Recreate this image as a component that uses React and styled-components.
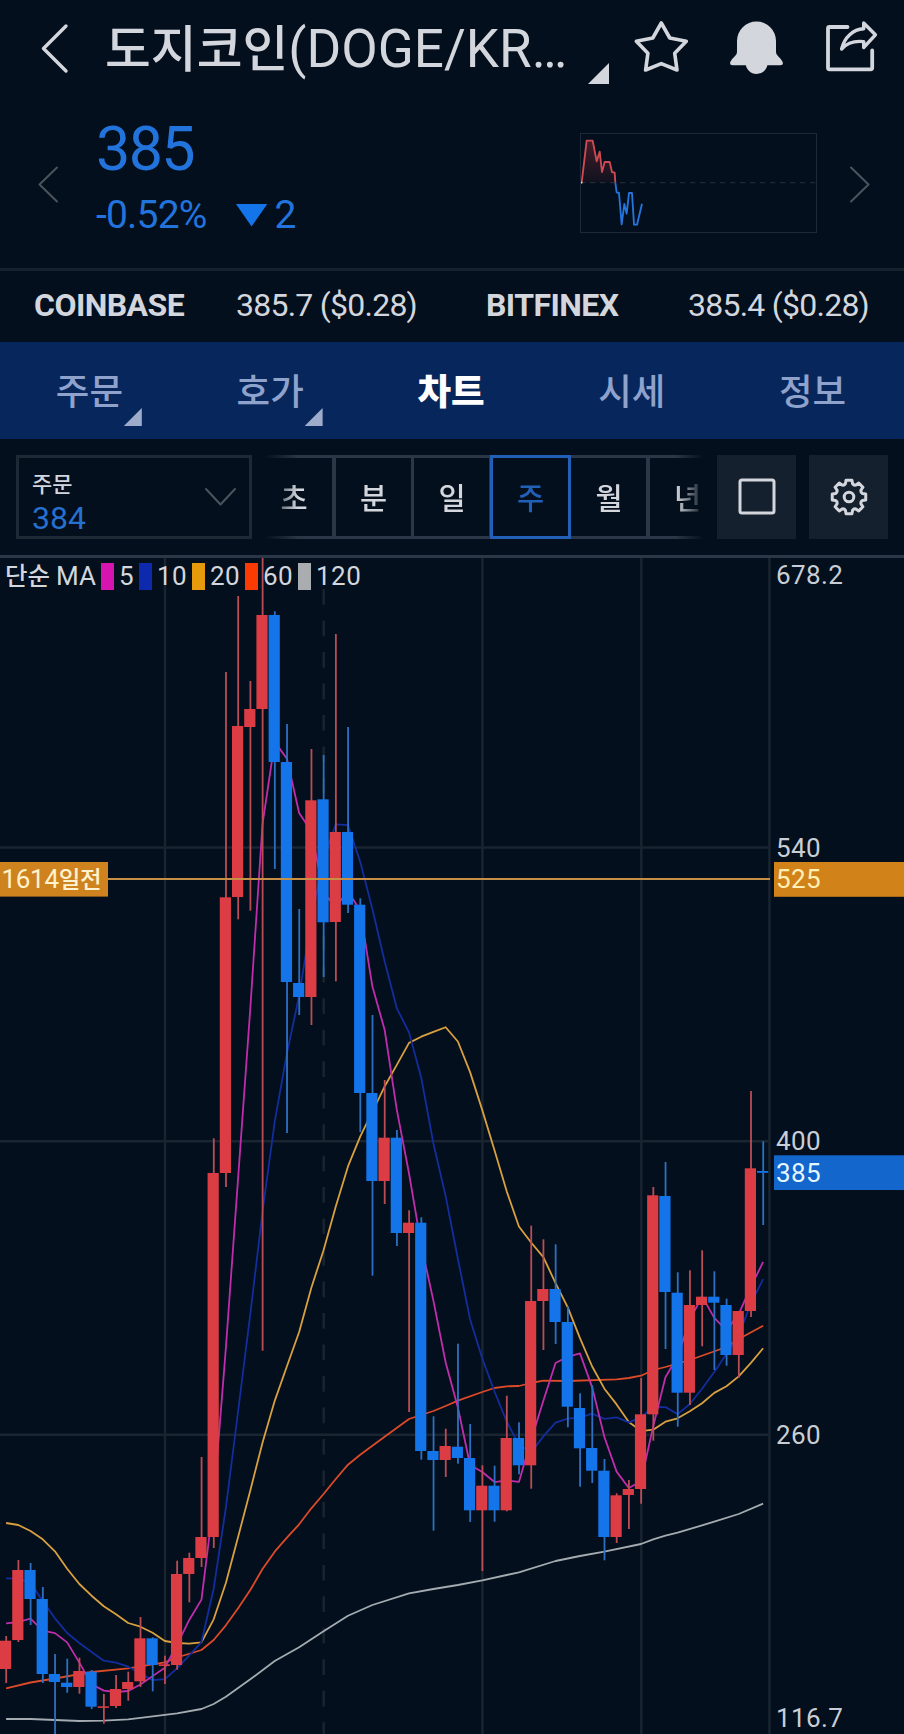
import React, { useState } from 'react';
import styled, { createGlobalStyle, css } from 'styled-components';

const GlobalStyle = createGlobalStyle`
  * {
    box-sizing: border-box;
  }
  body {
    margin: 0;
    background: #030f1c;
  }
  button {
    padding: 0;
    margin: 0;
    border: 0;
    background: none;
    color: inherit;
    font: inherit;
  }
  svg {
    display: block;
    flex: none;
  }
`;

const Page = styled.div`
  display: flex;
  flex-direction: column;
  width: 904px;
  height: 1734px;
  overflow: hidden;
  background: #030f1c;
  color: #d3d6dc;
  font-family: Roboto, 'Noto Sans CJK KR', sans-serif;
`;

const Header = styled.header`
  display: flex;
  align-items: flex-start;
  height: 110px;
  padding: 16px 20px 0 40px;
`;
const BackButton = styled.button`
  display: flex;
  width: 65px;
  height: 62px;
`;
const Title = styled.h1`
  width: 481px;
  margin: 0;
  padding-top: 1px;
  font-size: 53px;
  font-weight: 400;
  line-height: 64px;
  white-space: nowrap;
`;
// Hangul glyphs run larger and thinner than the latin ones at the same size
const Hangul = styled.span`
  font-size: 0.94em;
  font-weight: 500;
`;
const Corner = styled.span`
  width: ${(props) => props.$size}px;
  height: ${(props) => props.$size}px;
  background: currentColor;
  clip-path: polygon(100% 0, 100% 100%, 0 100%);
`;
const TitleCorner = styled(Corner)`
  margin: 47px 21px 0 2px;
`;
const HeaderIcons = styled.div`
  display: flex;
  gap: 34px;
`;

const Summary = styled.section`
  display: flex;
  height: 161px;
  padding: 0 34px 0 38px;
  border-bottom: 3px solid #15212d;
`;
const Step = styled.button`
  height: 37px;
  margin-top: 56px;
  color: #4b535d;
`;
const Quote = styled.div`
  display: flex;
  flex-direction: column;
  flex: 1;
  padding-left: 38px;
  color: #2274dc;
`;
const Price = styled.strong`
  margin-top: 3px;
  font-size: 61px;
  font-weight: 400;
  line-height: 72px;
  letter-spacing: -1.6px;
`;
const Change = styled.div`
  display: flex;
  align-items: center;
  margin-top: 7px;
  font-size: 39px;
  line-height: 46px;
  letter-spacing: -0.8px;
`;
const Down = styled.span`
  width: 32px;
  height: 23px;
  margin: 0 7px 0 29px;
  background: #1474ea;
  clip-path: polygon(0 0, 100% 0, 50% 100%);
`;
const MiniChart = styled.div`
  width: 237px;
  height: 100px;
  margin: 23px 33px 0 0;
  border: 1px solid #1d2934;
`;

const Exchanges = styled.section`
  display: grid;
  grid-template-columns: 1fr 1fr;
  height: 71px;
`;
const Exchange = styled.div`
  display: flex;
  align-items: center;
  justify-content: space-between;
  padding: 0 35px 4px 34px;
  font-size: 32px;
  letter-spacing: -0.75px;
`;
const ExchangeName = styled.b`
  letter-spacing: -0.55px;
`;

const Tabs = styled.nav`
  display: grid;
  grid-template-columns: repeat(5, 1fr);
  height: 97px;
  background: #07275c;
`;
const Tab = styled.button`
  position: relative;
  padding: 0 2px 3px 0;
  color: ${(props) => (props.$active ? '#ffffff' : '#8fa2cc')};
  font-size: 36.5px;
  font-weight: ${(props) => (props.$active ? 900 : 500)};
`;
const TabCorner = styled(Corner)`
  position: absolute;
  right: 39px;
  bottom: 13px;
  background: #9dacca;
`;

const Toolbar = styled.div`
  display: flex;
  height: 119px;
  padding: 16px 16px 0;
  border-bottom: 3px solid #2b3746;
`;
const OrderSelect = styled.button`
  display: flex;
  align-items: center;
  justify-content: space-between;
  width: 236px;
  height: 84px;
  padding: 0 13px;
  border: 3px solid #1d2a36;
  color: #4b535d;
  text-align: left;
`;
const OrderText = styled.span`
  display: flex;
  flex-direction: column;
  padding-top: 12px;
  color: #d3d6dc;
  font-size: 22px;
  font-weight: 500;
  line-height: 28px;
`;
const OrderPrice = styled.span`
  margin-top: 1px;
  color: #2670d0;
  font-size: 32px;
  font-weight: 400;
  line-height: 36px;
`;
const Periods = styled.div`
  display: flex;
  width: 442px;
  height: 84px;
  margin: 0 11px 0 12px;
  overflow: hidden;
  mask-image: linear-gradient(to right, transparent 0, #000 34px, #000 412px, transparent 440px);
`;
const Period = styled.button`
  flex: none;
  width: 81px;
  height: 84px;
  margin-left: -2.5px;
  padding: 0 0 2px 1px;
  border: 3px solid #2b3746;
  font-size: 29.5px;
  font-weight: 500;
  &:first-child {
    width: 84px;
    margin-left: -13px;
    padding-left: 2px;
  }
  ${(props) => props.$active && css`
    z-index: 1;
    border-color: #2260b8;
    color: #2260b8;
  `}
`;
const ToolButton = styled.button`
  display: flex;
  align-items: center;
  justify-content: center;
  width: 79px;
  height: 84px;
  margin-right: 13px;
  background: #15202e;
  &:last-child {
    margin-right: 0;
  }
`;

const ChartArea = styled.main`
  position: relative;
  flex: 1;
`;
const Legend = styled.div`
  position: absolute;
  top: 3px;
  left: 5px;
  display: flex;
  align-items: center;
  height: 30px;
  font-size: 26px;
  letter-spacing: 0.4px;
`;
const LegendTitle = styled.span`
  width: 91px;
  margin-top: -3px;
  letter-spacing: -0.1px;
  white-space: nowrap;
`;
const Swatch = styled.i`
  width: 13px;
  height: 27px;
  margin: 1px 5px 0;
  background: ${(props) => props.$color};
`;
const ScaleText = styled.text`
  fill: ${(props) => props.$fill || '#c9ced6'};
  font-size: 26px;
  letter-spacing: 0.4px;
`;
const DaysText = styled(ScaleText)`
  letter-spacing: -0.3px;
`;

const RED = '#dc3d45';
const BLUE = '#1474ea';

// direction, wick top, body top, body bottom, wick bottom
const candles = [
  ['u', 1636, 1640.7, 1669, 1683], ['u', 1560, 1570, 1640, 1642],
  ['d', 1563, 1570, 1599, 1625], ['d', 1587, 1599, 1674, 1683],
  ['d', 1654, 1674, 1682, 1740], ['d', 1658.7, 1682.7, 1687, 1692.7],
  ['u', 1657.7, 1671, 1687, 1693.7], ['d', 1670, 1671.7, 1706.7, 1709],
  ['u', 1694, 1706.3, 1707.9, 1723.7], ['u', 1675, 1689, 1706, 1708],
  ['u', 1671.7, 1682, 1689, 1700.7], ['u', 1617, 1638.3, 1681.3, 1687],
  ['d', 1637.3, 1638.3, 1665, 1691.3], ['u', 1655.7, 1664.3, 1666, 1684],
  ['u', 1560.7, 1574, 1665, 1669.7], ['u', 1552.7, 1558, 1574, 1602.3],
  ['u', 1457, 1537, 1558, 1567], ['u', 1138.3, 1173, 1537, 1548],
  ['u', 672, 897.3, 1173, 1187], ['u', 596, 726, 897, 919.3],
  ['u', 681, 709, 727, 910.7], ['u', 550, 615, 709, 1350.7],
  ['d', 611.3, 615, 762, 869], ['d', 724, 762, 982, 1133],
  ['d', 909, 983, 997, 1015], ['u', 749, 800.3, 997, 1025],
  ['d', 755, 799.3, 922.3, 977], ['u', 634, 832, 922, 981.3],
  ['d', 727, 832, 904.7, 913], ['d', 898.3, 904.7, 1093, 1132],
  ['d', 1015, 1093, 1181, 1275.7], ['u', 1080, 1137.7, 1181, 1204],
  ['d', 1130, 1137.7, 1233, 1246], ['u', 1210.3, 1222.7, 1233, 1412],
  ['d', 1217.3, 1222.7, 1451, 1459.7], ['d', 1416.3, 1451, 1460, 1530.7],
  ['u', 1428.7, 1446, 1460, 1477], ['d', 1343.7, 1446.7, 1458, 1463.7],
  ['d', 1424, 1458, 1510.3, 1522], ['u', 1465.3, 1485.7, 1510.3, 1571],
  ['d', 1465.7, 1485.7, 1510.3, 1521.7], ['u', 1395.7, 1438, 1510.3, 1511.3],
  ['d', 1422.3, 1438, 1465.3, 1474.3], ['u', 1225.7, 1301, 1465.3, 1488.7],
  ['u', 1239.3, 1289, 1301, 1350], ['d', 1244.3, 1289, 1322, 1344],
  ['d', 1306.3, 1322, 1406.7, 1427.3], ['d', 1393.3, 1408, 1448.3, 1486.7],
  ['d', 1385.3, 1448, 1470.7, 1483], ['d', 1459, 1470.7, 1537, 1560.3],
  ['u', 1493.3, 1495.3, 1537, 1543], ['u', 1480, 1489, 1495, 1529],
  ['u', 1378, 1414.3, 1489, 1503.7], ['u', 1187, 1195.3, 1414.3, 1440.7],
  ['d', 1162, 1196, 1292, 1349], ['d', 1272.3, 1292.7, 1392.7, 1426.7],
  ['u', 1270.3, 1305, 1392.7, 1405], ['u', 1250.3, 1296.7, 1305, 1346.3],
  ['d', 1271.3, 1296.7, 1302.7, 1370], ['d', 1298.7, 1305, 1355, 1365.7],
  ['u', 1311, 1311, 1355, 1377.7], ['u', 1091, 1168.3, 1311, 1317],
  ['d', 1141.3, 1171, 1172.8, 1225],
];

const xOf = (i) => 6.1 + i * 12.21;
const closes = candles.map(([dir, , top, bottom]) => (dir === 'u' ? top : bottom));

// The first values need candles older than the visible range, so they are given.
const average = (period, first) => closes.map((_, i) => {
  if (i < first.length) return [i, first[i]];
  const part = closes.slice(i - period + 1, i + 1);
  return [i, part.reduce((sum, y) => sum + y, 0) / period];
});

const ma5 = average(5, [1623.3, 1622, 1618.7, 1630.7]);
const ma10 = average(10, [1578.3, 1578.7, 1583, 1601, 1618.3, 1633, 1643, 1652, 1660.7]);
const ma20 = average(20, [
  1523, 1525, 1531, 1539.3, 1551.3, 1568.7, 1584, 1595.7, 1606.3, 1614.3,
  1623, 1626.7, 1632.7, 1641, 1643, 1643.7, 1642.3, 1619.3, 1583,
]);
const ma60 = [
  [0, 1688.3], [2, 1682.5], [4, 1678.5], [7, 1672], [10, 1668.3], [13, 1662.3],
  [14, 1657.5], [16, 1650], [17, 1640], [18, 1625.3], [19, 1608.3], [20, 1590],
  [21, 1569], [22, 1551.7], [23, 1537.7], [24, 1524.3], [25, 1508.3], [26, 1494],
  [27, 1479], [28, 1464.7], [29, 1454.8], [31, 1436.7], [33, 1419], [34, 1415],
  [35, 1411], [36, 1406], [37, 1400.7], [39, 1392], [40, 1388], [41, 1386.3],
  [42, 1386], [43, 1383], [44, 1380.7], [46, 1381], [50, 1379.3], [51, 1378],
  [52, 1375.7], [53, 1370], [54, 1367], [56, 1360], [59, 1347], [60, 1339], [62, 1325.7],
];
const ma120 = [
  [0, 1719], [2, 1719], [4, 1720], [6, 1721], [8, 1720.7], [10, 1719.3],
  [12, 1716.3], [14, 1713.3], [16, 1709], [17, 1704], [18, 1696.7], [20, 1679.3],
  [22, 1661], [24, 1647.3], [26, 1631.3], [28, 1615.7], [30, 1605], [33, 1593.3],
  [35, 1589], [37, 1585], [39, 1580.3], [41, 1575], [42, 1572.3], [45, 1561],
  [47, 1556], [49, 1551.7], [52, 1544], [53, 1539.3], [54, 1535.7], [55, 1532.7],
  [58, 1521.7], [60, 1514], [62, 1503.7],
];

const averages = [
  { period: 120, color: '#a9adb0', line: '#a4abb1', points: ma120 },
  { period: 60, color: '#fb3b02', line: '#dc4a28', points: ma60 },
  { period: 20, color: '#e79b0c', line: '#d9a040', points: ma20 },
  { period: 10, color: '#0d2aae', line: '#132d9c', points: ma10 },
  { period: 5, color: '#d614b0', line: '#c02dac', points: ma5 },
];
const legend = [...averages].reverse();

const exchanges = [
  { name: 'COINBASE', price: '385.7 ($0.28)' },
  { name: 'BITFINEX', price: '385.4 ($0.28)' },
];
const tabs = [
  { label: '주문', menu: true },
  { label: '호가', menu: true },
  { label: '차트' },
  { label: '시세' },
  { label: '정보' },
];
const periods = ['초', '분', '일', '주', '월', '년'];

const StarIcon = () => (
  <svg width="62" height="62" fill="none" stroke="currentColor" strokeWidth="3.6" strokeLinejoin="round">
    <path d="M31.3 7 39.8 22 56.3 25.3 44.7 37.2 47 54 31.3 47.6 15.6 54 17.9 37.2 6.3 25.3 22.8 22Z" />
  </svg>
);

const BellIcon = () => (
  <svg width="62" height="62" fill="currentColor">
    <path d="M11 25A19.5 19.5 0 0 1 50 25V36C50 40 56 42.5 57 47Q57 49.3 54.5 49.3H6.5Q4 49.3 4 47C5 42.5 11 40 11 36Z" />
    <circle cx="30.6" cy="47" r="11" />
  </svg>
);

const ShareIcon = () => (
  <svg width="62" height="62" fill="none" stroke="currentColor" strokeWidth="3.8" strokeLinejoin="round" strokeLinecap="round">
    <path d="M25.5 11H7.5Q6 11 6 12.5V51.8Q6 53.3 7.5 53.3H48.6Q50.2 53.3 50.2 51.8V34.5" />
    <path d="M41.7 7 53.4 18.8 41.7 31.5V25.6C32 24.5 24.5 27.5 19.6 33C22.5 21 31 13.5 41.7 12.8Z" strokeWidth="3.4" />
  </svg>
);

// Eight teeth around the hub
const gearPath = Array.from({ length: 8 }, (_, i) => {
  const point = (radius, degrees) => {
    const angle = ((i * 45 + degrees - 90) * Math.PI) / 180;
    return `${(20 + radius * Math.cos(angle)).toFixed(2)} ${(20 + radius * Math.sin(angle)).toFixed(2)}`;
  };
  return `${i ? 'L' : 'M'}${point(17, -10)}L${point(17, 10)}L${point(13.8, 15)}Q${point(12.4, 22.5)} ${point(13.8, 30)}`;
}).join('');

const GearIcon = () => (
  <svg width="40" height="40" fill="none" stroke="currentColor" strokeWidth="3" strokeLinejoin="round">
    <path d={`${gearPath}Z`} />
    <circle cx="20" cy="20" r="4.8" />
  </svg>
);

const Chevron = ({ points, width, height, stroke }) => (
  <svg width={width} height={height} fill="none" stroke="currentColor" strokeWidth={stroke} strokeLinecap="round" strokeLinejoin="round">
    <polyline points={points} />
  </svg>
);

const Sparkline = () => (
  <svg width="235" height="98" viewBox="3 3 705 294" fill="none" strokeLinejoin="round" strokeWidth="5.5">
    <defs>
      <linearGradient id="rise" x1="0" y1="0" x2="0" y2="1">
        <stop offset="0" stopColor={RED} stopOpacity="0.3" />
        <stop offset="1" stopColor={RED} stopOpacity="0.06" />
      </linearGradient>
    </defs>
    <path d="M0 149H708" stroke="#1d2934" strokeWidth="4" strokeDasharray="16 14" />
    <path d="M5 149 20 23H38L50 85 59 56 66 117 74 87H89L96 117 104 119 106 149Z" fill="url(#rise)" />
    <path d="M5 149 20 23H38L50 85 59 56 66 117 74 87H89L96 117 104 119 106 149" stroke="#d04a54" />
    <path d="M106 149 110 178 117 180 125 274 133 213 140 242 147 180H156L162 275H171L186 212" stroke="#2476de" />
    <path d="M2 149H7" stroke="#e6e8ec" />
  </svg>
);

const Candle = ({ index, data }) => {
  const [dir, high, top, bottom, low] = data;
  const x = xOf(index);
  return (
    <g>
      <rect x={x - 0.8} y={high} width="1.8" height={low - high} fill={dir === 'u' ? '#bc4c54' : '#2d70c2'} />
      <rect x={x - 6.1} y={top} width="11.2" height={Math.max(bottom - top, 1.6)} fill={dir === 'u' ? RED : BLUE} />
    </g>
  );
};

const PriceChart = () => (
  <svg width="904" height="1176" viewBox="0 558 904 1176">
    <g stroke="#1a2531" strokeWidth="2.4" fill="none">
      <path d="M0 847.5H769M0 1141.2H769M0 1434.8H769" />
      <path d="M165 558V1734M482.4 558V1734M641.3 558V1734M769.4 558V1734" />
      <path d="M323.7 589V1734" strokeDasharray="15.7 15.78" />
    </g>
    {averages.map(({ period, line, points }) => (
      <polyline
        key={period}
        points={points.map(([i, y]) => `${xOf(i)},${y}`).join(' ')}
        fill="none"
        stroke={line}
        strokeWidth="1.8"
        strokeLinejoin="round"
      />
    ))}
    {candles.map((data, i) => <Candle key={xOf(i)} index={i} data={data} />)}
    <rect x="108" y="878" width="662" height="2" fill="#c78f45" />
    <rect x="0" y="862" width="108" height="34.6" fill="#cf831f" />
    <rect x="774" y="862" width="130" height="34.8" fill="#d18218" />
    <rect x="774" y="1155.3" width="130" height="34.7" fill="#1266cc" />
    <DaysText x="1.5" y="888" $fill="#fff3cf">
      1614
      <tspan fontSize="23.5" fontWeight="500">일전</tspan>
    </DaysText>
    <ScaleText x="776" y="584">678.2</ScaleText>
    <ScaleText x="776" y="857">540</ScaleText>
    <ScaleText x="776" y="888" $fill="#fff0b8">525</ScaleText>
    <ScaleText x="776" y="1150">400</ScaleText>
    <ScaleText x="776" y="1182" $fill="#e4f6ff">385</ScaleText>
    <ScaleText x="776" y="1444">260</ScaleText>
    <ScaleText x="776" y="1727">116.7</ScaleText>
  </svg>
);

const App = () => {
  const [tab, setTab] = useState('차트');
  const [period, setPeriod] = useState('주');

  return (
    <Page>
      <GlobalStyle />
      <Header>
        <BackButton aria-label="뒤로">
          <Chevron width="32" height="62" stroke="3.4" points="26,10 3.5,32.5 26,55" />
        </BackButton>
        <Title>
          <Hangul>도지코인</Hangul>
          (DOGE/KR…
        </Title>
        <TitleCorner $size={21} />
        <HeaderIcons>
          <StarIcon />
          <BellIcon />
          <ShareIcon />
        </HeaderIcons>
      </Header>

      <Summary>
        <Step>
          <Chevron width="20" height="37" stroke="2" points="19,1.5 1.5,18.5 19,35.5" />
        </Step>
        <Quote>
          <Price>385</Price>
          <Change>
            -0.52%
            <Down />
            2
          </Change>
        </Quote>
        <MiniChart>
          <Sparkline />
        </MiniChart>
        <Step>
          <Chevron width="20" height="37" stroke="2" points="1,1.5 18.5,18.5 1,35.5" />
        </Step>
      </Summary>

      <Exchanges>
        {exchanges.map(({ name, price }) => (
          <Exchange key={name}>
            <ExchangeName>{name}</ExchangeName>
            <span>{price}</span>
          </Exchange>
        ))}
      </Exchanges>

      <Tabs>
        {tabs.map(({ label, menu }) => (
          <Tab key={label} $active={label === tab} onClick={() => setTab(label)}>
            {label}
            {menu && <TabCorner $size={18} />}
          </Tab>
        ))}
      </Tabs>

      <Toolbar>
        <OrderSelect>
          <OrderText>
            주문
            <OrderPrice>384</OrderPrice>
          </OrderText>
          <Chevron width="31" height="20" stroke="2" points="1,2 15.5,17.5 30,2" />
        </OrderSelect>
        <Periods>
          {periods.map((label) => (
            <Period key={label} $active={label === period} onClick={() => setPeriod(label)}>
              {label}
            </Period>
          ))}
        </Periods>
        <ToolButton>
          <svg width="38" height="38" fill="none" stroke="currentColor" strokeWidth="3">
            <rect x="2" y="2" width="34" height="33" rx="2" />
          </svg>
        </ToolButton>
        <ToolButton>
          <GearIcon />
        </ToolButton>
      </Toolbar>

      <ChartArea>
        <PriceChart />
        <Legend>
          <LegendTitle>
            <Hangul>단순</Hangul>
            {' MA'}
          </LegendTitle>
          {legend.map((item) => (
            <React.Fragment key={item.period}>
              <Swatch $color={item.color} />
              {item.period}
            </React.Fragment>
          ))}
        </Legend>
      </ChartArea>
    </Page>
  );
};

export default App;
